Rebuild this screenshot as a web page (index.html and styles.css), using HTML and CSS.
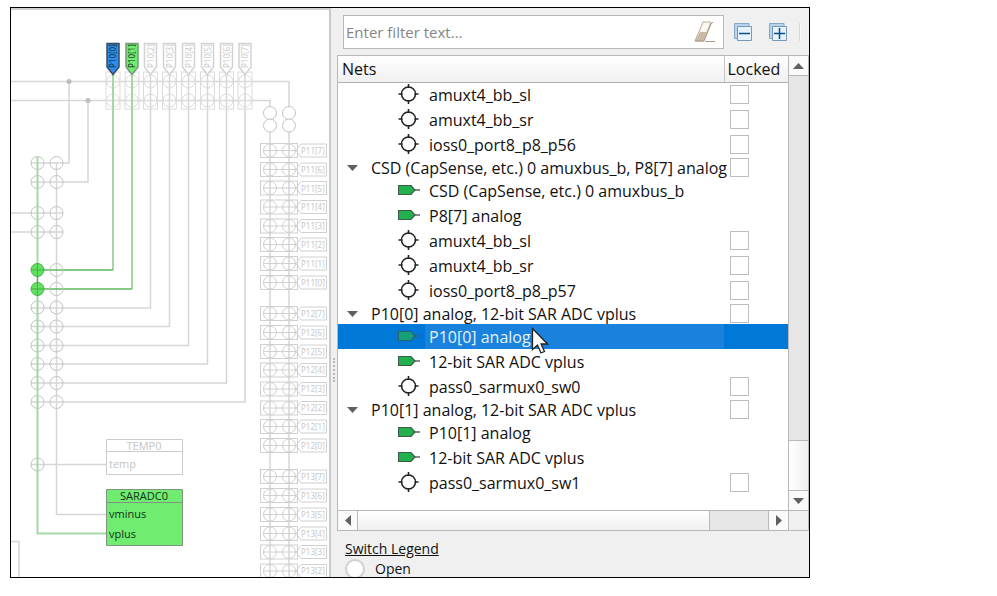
FILE: index.html
```
<!DOCTYPE html>
<html lang="en">
<head>
<meta charset="utf-8">
<title>Analog Routing</title>
<link rel="stylesheet" href="styles.css">
</head>
<body>
<svg class="defs" aria-hidden="true">
  <defs>
    <g id="sw"><circle r="6.5"/></g>
    <g id="sw-col"><rect x="-7" y="-9.500" width="14" height="37"/><circle r="6.500"/><circle cy="19" r="6.500"/><path d="M-7 0H7M-7 19H7"/></g>
    <path id="pin-top" d="M-6 43.500H6V67L0 74.500L-6 67Z"/>
    <g id="port"><rect x="260.500" y="-7" width="37" height="14"/><path d="M263 0H296L301 -6.500H326.500V6.500H301L296 0"/><circle cx="270" r="6.500"/><circle cx="289" r="6.500"/></g>
    <g id="i-switch" fill="none" stroke="#222"><circle cx="10.500" cy="10" r="7" fill="#fff" stroke-width="1.500"/><path d="M10.500 0V4M10.500 16V20M.500 10H4.500M16.500 10H20.500" stroke-width="1.600"/></g>
    <g id="i-net"><path d="M.500 5.500H13L17 10L13 14.500H.500Z" fill="#22b14c" stroke="#3c5c46" stroke-width="1.200"/><path d="M17 10H22" stroke="#555" stroke-width="1.400"/></g>
    <path id="i-down" d="M0 0H11L5.500 6Z" fill="#606060"/>
  </defs>
</svg>
<main class="window">
  <section class="diagram" aria-label="Routing diagram">
    <svg class="schematic" viewBox="11 8 320 569" width="320" height="569">
      <g class="wire">
        <path d="M11 81.500H289V107M11 100.500H270V107M69 81V163H31M88 100V182H31M11 213H63M11 232H63M56.500 163V514.500H106M270 132V577M289 132V577"/>
        <path d="M150.500 75V308H31M169.500 75V326.500H31M188.500 75V345.500H31M207.500 75V364H31M226.500 75V383H31M245 75V402H31M31 464.500H106M11 541.500H19V577"/>
      </g>
      <circle class="dot" cx="69" cy="81.500" r="2.500"/><circle class="dot" cx="88" cy="100.500" r="2.500"/>
      <g class="box">
        <use href="#sw-col" x="113" y="81.500"/><use href="#sw-col" x="132" y="81.500"/><use href="#sw-col" x="150.500" y="81.500"/><use href="#sw-col" x="169.500" y="81.500"/><use href="#sw-col" x="188.500" y="81.500"/><use href="#sw-col" x="207.500" y="81.500"/><use href="#sw-col" x="226.500" y="81.500"/><use href="#sw-col" x="245" y="81.500"/>
      </g>
      <g class="live">
        <path d="M37.500 157V533.500H106M113 75V270M132 75V289"/><path class="live-strong" d="M37.500 270H113M37.500 289H132"/>
      </g>
      <g class="switch">
        <use href="#sw" x="37.500" y="163"/><use href="#sw" x="56.500" y="163"/><use href="#sw" x="37.500" y="182"/><use href="#sw" x="56.500" y="182"/>
        <use href="#sw" x="37.500" y="213"/><use href="#sw" x="56.500" y="213"/><use href="#sw" x="37.500" y="232"/><use href="#sw" x="56.500" y="232"/>
        <use href="#sw" x="56.500" y="270"/><use href="#sw" x="56.500" y="289"/>
        <use href="#sw" x="37.500" y="307.500"/><use href="#sw" x="56.500" y="307.500"/><use href="#sw" x="37.500" y="326.500"/><use href="#sw" x="56.500" y="326.500"/>
        <use href="#sw" x="37.500" y="345.500"/><use href="#sw" x="56.500" y="345.500"/><use href="#sw" x="37.500" y="364"/><use href="#sw" x="56.500" y="364"/>
        <use href="#sw" x="37.500" y="383"/><use href="#sw" x="56.500" y="383"/><use href="#sw" x="37.500" y="402"/><use href="#sw" x="56.500" y="402"/>
        <use href="#sw" x="37.500" y="464.500"/>
      </g>
      <g class="closed"><circle cx="37.500" cy="270" r="6.500"/><circle cx="37.500" cy="289" r="6.500"/><path d="M31 270H44M37.500 263V296M31 289H44"/></g>
      <g class="switch empty"><circle cx="270" cy="113" r="6.500"/><circle cx="270" cy="125.500" r="6.500"/><circle cx="289" cy="113" r="6.500"/><circle cx="289" cy="125.500" r="6.500"/></g>
      <use class="pin selected" href="#pin-top" x="113"/><use class="pin routed" href="#pin-top" x="132"/><use class="pin" href="#pin-top" x="150.500"/><use class="pin" href="#pin-top" x="169.500"/><use class="pin" href="#pin-top" x="188.500"/><use class="pin" href="#pin-top" x="207.500"/><use class="pin" href="#pin-top" x="226.500"/><use class="pin" href="#pin-top" x="245"/>
      <g class="pin-text">
        <text class="on" transform="translate(116 68) rotate(-90)">P10[0]</text><text class="on" transform="translate(135 68) rotate(-90)">P10[1]</text><text transform="translate(154 68) rotate(-90)">P10[2]</text><text transform="translate(173 68) rotate(-90)">P10[3]</text><text transform="translate(192 68) rotate(-90)">P10[4]</text><text transform="translate(211 68) rotate(-90)">P10[5]</text><text transform="translate(230 68) rotate(-90)">P10[6]</text><text transform="translate(248 68) rotate(-90)">P10[7]</text>
      </g>
      <g class="port">
        <use href="#port" y="150.500"/><use href="#port" y="169.500"/><use href="#port" y="188"/><use href="#port" y="207"/><use href="#port" y="226"/><use href="#port" y="244.500"/><use href="#port" y="263.500"/><use href="#port" y="282.500"/>
        <use href="#port" y="313.500"/><use href="#port" y="332.500"/><use href="#port" y="351.500"/><use href="#port" y="370"/><use href="#port" y="389"/><use href="#port" y="408"/><use href="#port" y="426.500"/><use href="#port" y="445.500"/>
        <use href="#port" y="476.500"/><use href="#port" y="495.500"/><use href="#port" y="514.500"/><use href="#port" y="533.500"/><use href="#port" y="552"/><use href="#port" y="571"/>
      </g>
      <g class="pin-text">
        <text x="301" y="154">P11[7]</text><text x="301" y="173">P11[6]</text><text x="301" y="192">P11[5]</text><text x="301" y="210">P11[4]</text><text x="301" y="229">P11[3]</text><text x="301" y="248">P11[2]</text><text x="301" y="267">P11[1]</text><text x="301" y="286">P11[0]</text>
        <text x="301" y="317">P12[7]</text><text x="301" y="336">P12[6]</text><text x="301" y="355">P12[5]</text><text x="301" y="373">P12[4]</text><text x="301" y="392">P12[3]</text><text x="301" y="411">P12[2]</text><text x="301" y="430">P12[1]</text><text x="301" y="449">P12[0]</text>
        <text x="301" y="480">P13[7]</text><text x="301" y="499">P13[6]</text><text x="301" y="518">P13[5]</text><text x="301" y="537">P13[4]</text><text x="301" y="555">P13[3]</text><text x="301" y="574">P13[2]</text>
      </g>
      <g class="block"><path d="M106.500 439.500H182.500V474.500H106.500ZM106.500 451.500H182.500"/><text x="144" y="450" text-anchor="middle">TEMP0</text><text x="109" y="468">temp</text></g>
      <g class="block active"><path d="M106.500 489.500H182.500V545.500H106.500ZM106.500 502.500H182.500"/><text x="144" y="500" text-anchor="middle">SARADC0</text><text x="109" y="518">vminus</text><text x="109" y="538">vplus</text></g>
    </svg>
  </section>
  <div class="splitter" role="separator"><span class="grip"></span></div>
  <section class="panel">
    <div class="toolbar">
      <div class="filter">
        <input class="filter-input" type="text" aria-label="Filter nets" placeholder="Enter filter text...">
        <button class="tool" aria-label="Clear filter">
          <svg width="22" height="22" viewBox="0 0 22 22"><path d="M9 1H17L9.500 20H1Z" fill="#faf6f0" stroke="#b9ac98"/><path d="M6 11H13.500L9.500 20H1Z" fill="#cbb9a4"/><path d="M1 20H10L17 3L19 1M11 20.500H21" fill="none" stroke="#a99a85"/></svg>
        </button>
      </div>
      <div class="tools">
        <button class="tool" aria-label="Collapse all">
          <svg width="19" height="19" viewBox="0 0 19 19"><path d="M1.500 .500H16V4H5V15.500H1.500Z" fill="#b7d3ee" stroke="#84a8c8"/><path d="M4.500 3.500H18.500V17.500H4.500Z" fill="#e6f3fc" stroke="#7898b8"/><path d="M6 10.500H17" stroke="#0b4f84" stroke-width="1.500"/></svg>
        </button>
        <button class="tool" aria-label="Expand all">
          <svg width="19" height="19" viewBox="0 0 19 19"><path d="M1.500 .500H16V4H5V15.500H1.500Z" fill="#b7d3ee" stroke="#84a8c8"/><path d="M4.500 3.500H18.500V17.500H4.500Z" fill="#e6f3fc" stroke="#7898b8"/><path d="M6 10.500H17M11.500 5V16" stroke="#0b4f84" stroke-width="1.500"/></svg>
        </button>
      </div>
      <span class="divider"></span>
    </div>
    <div class="tree">
      <div class="tree-view">
        <table class="nets">
          <thead><tr><th>Nets</th><th class="lock">Locked</th></tr></thead>
          <tbody>
            <tr><td><span class="net"><svg class="icon"><use href="#i-switch"/></svg>amuxt4_bb_sl</span></td><td class="lock"><input type="checkbox" aria-label="Lock amuxt4_bb_sl"></td></tr>
            <tr><td><span class="net"><svg class="icon"><use href="#i-switch"/></svg>amuxt4_bb_sr</span></td><td class="lock"><input type="checkbox" aria-label="Lock amuxt4_bb_sr"></td></tr>
            <tr><td><span class="net"><svg class="icon"><use href="#i-switch"/></svg>ioss0_port8_p8_p56</span></td><td class="lock"><input type="checkbox" aria-label="Lock ioss0_port8_p8_p56"></td></tr>
            <tr class="group"><td><span class="net"><svg class="arrow"><use href="#i-down"/></svg>CSD (CapSense, etc.) 0 amuxbus_b, P8[7] analog</span></td><td class="lock"><input type="checkbox" aria-label="Lock CSD net"></td></tr>
            <tr><td><span class="net"><svg class="icon"><use href="#i-net"/></svg>CSD (CapSense, etc.) 0 amuxbus_b</span></td><td class="lock"></td></tr>
            <tr><td><span class="net"><svg class="icon"><use href="#i-net"/></svg>P8[7] analog</span></td><td class="lock"></td></tr>
            <tr><td><span class="net"><svg class="icon"><use href="#i-switch"/></svg>amuxt4_bb_sl</span></td><td class="lock"><input type="checkbox" aria-label="Lock amuxt4_bb_sl"></td></tr>
            <tr><td><span class="net"><svg class="icon"><use href="#i-switch"/></svg>amuxt4_bb_sr</span></td><td class="lock"><input type="checkbox" aria-label="Lock amuxt4_bb_sr"></td></tr>
            <tr><td><span class="net"><svg class="icon"><use href="#i-switch"/></svg>ioss0_port8_p8_p57</span></td><td class="lock"><input type="checkbox" aria-label="Lock ioss0_port8_p8_p57"></td></tr>
            <tr class="group"><td><span class="net"><svg class="arrow"><use href="#i-down"/></svg>P10[0] analog, 12-bit SAR ADC vplus</span></td><td class="lock"><input type="checkbox" aria-label="Lock P10[0] net"></td></tr>
            <tr class="current"><td><span class="net"><svg class="icon"><use href="#i-net"/></svg><span class="name">P10[0] analog<svg class="cursor" width="18" height="28" viewBox="0 0 18 28"><path d="M1.500 1.500V22.500L6.500 18L10 26L13.500 24.500L10 17H16.500Z" fill="#fff" stroke="#222" stroke-width="1.300"/></svg></span></span></td><td class="lock"></td></tr>
            <tr><td><span class="net"><svg class="icon"><use href="#i-net"/></svg>12-bit SAR ADC vplus</span></td><td class="lock"></td></tr>
            <tr><td><span class="net"><svg class="icon"><use href="#i-switch"/></svg>pass0_sarmux0_sw0</span></td><td class="lock"><input type="checkbox" aria-label="Lock pass0_sarmux0_sw0"></td></tr>
            <tr class="group"><td><span class="net"><svg class="arrow"><use href="#i-down"/></svg>P10[1] analog, 12-bit SAR ADC vplus</span></td><td class="lock"><input type="checkbox" aria-label="Lock P10[1] net"></td></tr>
            <tr><td><span class="net"><svg class="icon"><use href="#i-net"/></svg>P10[1] analog</span></td><td class="lock"></td></tr>
            <tr><td><span class="net"><svg class="icon"><use href="#i-net"/></svg>12-bit SAR ADC vplus</span></td><td class="lock"></td></tr>
            <tr><td><span class="net"><svg class="icon"><use href="#i-switch"/></svg>pass0_sarmux0_sw1</span></td><td class="lock"><input type="checkbox" aria-label="Lock pass0_sarmux0_sw1"></td></tr>
          </tbody>
        </table>
      </div>
      <div class="vbar">
        <button class="step" aria-label="Scroll up"><svg width="11" height="6"><path d="M0 6H11L5.500 0Z" fill="#606060"/></svg></button>
        <div class="track"></div>
        <div class="thumb"></div>
        <button class="step" aria-label="Scroll down"><svg width="11" height="6"><use href="#i-down"/></svg></button>
      </div>
      <div class="hbar">
        <button class="step" aria-label="Scroll left"><svg width="6" height="11"><path d="M6 0V11L0 5.500Z" fill="#606060"/></svg></button>
        <div class="thumb"></div>
        <div class="track"></div>
        <button class="step" aria-label="Scroll right"><svg width="6" height="11"><path d="M0 0V11L6 5.500Z" fill="#606060"/></svg></button>
      </div>
      <div class="corner"></div>
    </div>
    <div class="legend">
      <h2 class="legend-title">Switch Legend</h2>
      <div class="legend-item"><span class="legend-dot"></span>Open</div>
    </div>
  </section>
</main>
</body>
</html>
```
FILE: styles.css
```
* { box-sizing: border-box; }
body {
  margin: 0;
  padding: 7px 187px 18px 10px;
  height: 100vh;
  background: #fff;
  color: #111;
  font: 15px/20px "Open Sans", "Noto Sans", sans-serif;
}
button { padding: 0; border: 0; background: none; }
svg { display: block; flex-shrink: 0; }
.defs { position: absolute; width: 0; height: 0; }

.window {
  display: grid;
  grid-template-columns: 320fr 6px 472fr;
  grid-template-rows: 100%;
  height: 100%;
  border: 1px solid #000;
  background: #f0f0f0;
  overflow: hidden;
}

/* Schematic */
.diagram { background: #fff; overflow: hidden; border-top: 2px solid #d0d0d0; border-right: 2px solid #c8c8c8; }
.schematic { margin-top: -2px; fill: none; }
.wire { stroke: #d6d6d6; stroke-width: 1.5; }
.dot { fill: #bdbdbd; }
.box { stroke: #dcdcdc; }
.live { stroke: #a5d7a5; stroke-width: 2; }
.live-strong { stroke: #5cb85c; stroke-width: 1.5; }
.switch { stroke: #c4c4c4; }
.empty { fill: #fff; }
.closed { fill: #63df63; stroke: #45b345; }
.pin { fill: #fff; stroke: #d2d2d2; stroke-width: 1.5; }
.pin.selected { fill: #2d8cf0; stroke: #3a4a5c; }
.pin.routed { fill: #70ec70; stroke: #779977; }
.port { stroke: #d0d0d0; }
.pin-text { font-family: "Noto Sans", sans-serif; font-size: 8px; stroke: none; fill: #c8c8c8; }
.pin-text .on { fill: #10301c; }
.block { stroke: #cccccc; fill: #fff; font-size: 11px; }
.block text { stroke: none; fill: #c4c4c4; }
.block.active { fill: #70ec70; stroke: #7f957f; }
.block.active text { fill: #14301a; }

.splitter { display: flex; align-items: center; justify-content: center; padding-top: 154px; }
.grip { height: 24px; border-left: 2px dotted #b8b8b8; }

/* Nets panel */
.panel { display: flex; flex-direction: column; min-width: 0; }
.toolbar { display: flex; align-items: center; gap: 9px; padding: 7px 8px 6px 6px; }
.tools { display: flex; gap: 16px; }
.filter { display: flex; flex: 1; align-items: center; height: 34px; padding-right: 7px; border: 1px solid #b8b8b8; background: #fff; }
.filter-input { flex: 1; min-width: 0; border: 0; padding: 0 2px; outline: 0; background: none; font: inherit; }
.filter-input::placeholder { color: #858585; }
.divider { width: 2px; height: 18px; margin-left: 3px; background: #fafafa; border-left: 1px solid #d8d8d8; }

.tree {
  display: grid;
  grid-template-columns: 1fr 20px;
  grid-template-rows: 454px 20px;
  border: 1px solid #b8b8b8;
}
.tree-view { background: #fff; overflow: hidden; }
.nets { width: 100%; table-layout: fixed; border-collapse: collapse; font-size: 16px; }
.nets th { height: 26px; padding: 0 4px; text-align: left; font-weight: 400; background: linear-gradient(#fff, #f0f0f0); border-bottom: 1px solid #b0b0b0; }
.nets th.lock { padding: 0 3px; border-left: 1px solid #c4c4c4; }
.nets td { height: 25px; padding: 0; }
.nets .group td { height: 21px; }
.lock { width: 64px; }
td.lock { line-height: 0; }
.net { display: flex; align-items: center; padding-left: 60px; white-space: nowrap; }
.icon { width: 24px; height: 21px; margin-right: 7px; }
.group .net { padding-left: 9px; }
.arrow { width: 11px; height: 6px; margin-right: 13px; }
.nets input { appearance: none; display: block; width: 19px; height: 19px; margin: 0 0 0 6px; border: 1px solid #bdbdbd; background: #fff; }
.current { background: #0078d7; color: #e6f2fc; }
.current .net { background: linear-gradient(90deg, #0078d7 87px, #1a82dc 87px); height: 25px; }
.current .icon { opacity: .7; }
.name { position: relative; }
.cursor { position: absolute; left: 100%; top: 0; z-index: 1; }

.step { display: flex; align-items: center; justify-content: center; width: 19px; height: 19px; background: #fafafa; }
.track { background: #e6e6e6; border: 0 solid #b8b8b8; }
.thumb { background: linear-gradient(#fff, #f0f0f0); }
.vbar { display: flex; flex-direction: column; border-left: 1px solid #b8b8b8; }
.vbar .track { flex: 1; border-width: 1px 0; }
.vbar .thumb { height: 50px; background: linear-gradient(90deg, #fff, #f0f0f0); border-bottom: 1px solid #b8b8b8; }
.hbar { display: flex; border-top: 1px solid #b8b8b8; }
.hbar .thumb { flex: 6; border-left: 1px solid #b8b8b8; }
.hbar .track { flex: 1; border-width: 0 1px; }
.corner { border: 1px solid #b8b8b8; border-width: 1px 0 0 1px; }

.legend { padding: 8px 8px 0; }
.legend-title { margin: 0; font: inherit; font-size: 14px; text-decoration: underline; }
.legend-item { display: flex; align-items: center; gap: 10px; font-size: 14px; }
.legend-dot { width: 20px; height: 20px; border: 2px solid #d0d0d0; border-radius: 50%; background: #fff; }
```
